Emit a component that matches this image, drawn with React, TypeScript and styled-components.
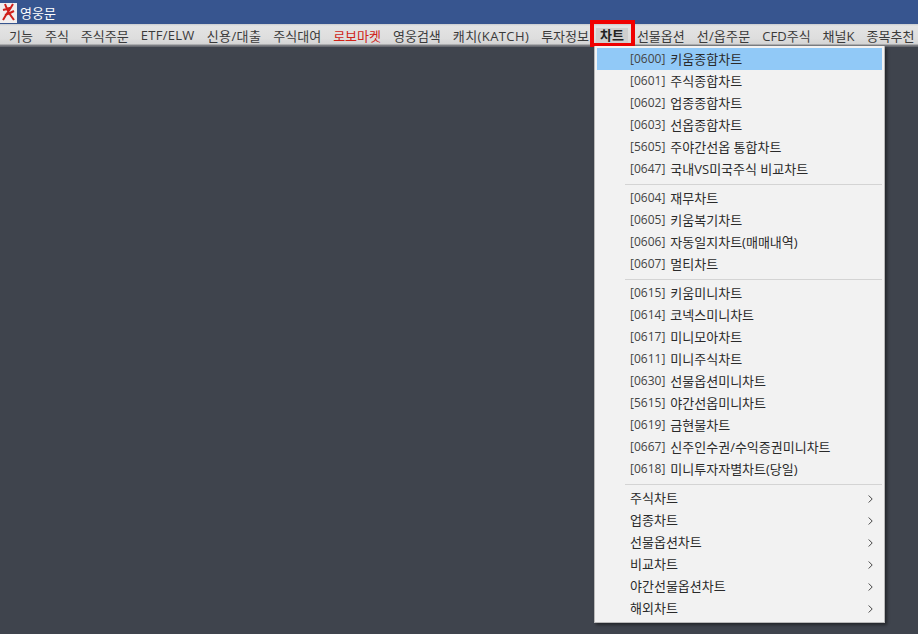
import React from "react";
import styled, { createGlobalStyle } from "styled-components";

const Global = createGlobalStyle`
  html, body { margin: 0; padding: 0; background: #3f444d; }
  body { width: 918px; height: 634px; overflow: hidden; font-family: "Open Sans", "Noto Sans CJK KR", sans-serif; }
`;

const Frame = styled.div`
  position: relative;
  width: 918px;
  height: 634px;
  display: flex;
  flex-direction: column;
  background: #3f444d;
`;

const TitleBar = styled.div`
  height: 24px;
  display: flex;
  align-items: center;
  gap: 3px;
  background: #37558f;
  color: #fff;
  font-size: 13px;
`;

const LogoBox = styled.div`
  width: 17px;
  height: 20px;
  margin-top: 1px;
  display: flex;
  align-items: center;
  justify-content: center;
  background: #f1eeee;
`;

const MenuBar = styled.div`
  height: 23px;
  display: flex;
  align-items: center;
  gap: 12px;
  padding: 0 0 1px 9px;
  box-sizing: border-box;
  overflow: hidden;
  white-space: nowrap;
  font-size: 13px;
  background: linear-gradient(#c9cbce 0, #e4e4e4 2px, #dedede 14px, #d4d4d4 20px, #85878b 21px, #5d6068 23px);
`;

const TopItem = styled.span<{ $red?: boolean; $active?: boolean; $track?: number }>`
  color: ${(p) => (p.$red ? "#cf2418" : "#3a3a3a")};
  letter-spacing: ${(p) => p.$track ?? 0}px;
  ${(p) =>
    p.$active
      ? `font-weight: 700; color: #222; background: #cfcfcf; padding: 0 4px; margin: 0 -3px 0 -5px; line-height: 15px;`
      : ""}
`;

const RedMark = styled.div`
  position: absolute;
  left: 590px;
  top: 20px;
  width: 45px;
  height: 27px;
  box-sizing: border-box;
  border: 4px solid #f00000;
  pointer-events: none;
`;

const Dropdown = styled.div`
  position: absolute;
  left: 594px;
  top: 46px;
  width: 291px;
  height: 577px;
  box-sizing: border-box;
  padding: 2px;
  background: #f2f2f2;
  border: 1px solid #b9b9b9;
  border-top: 0;
  box-shadow: 2px 2px 3px rgba(0, 0, 0, 0.45);
  font-size: 13px;
  color: #2a2a2a;
`;

const Row = styled.div<{ $active?: boolean }>`
  height: 22px;
  box-sizing: border-box;
  display: flex;
  align-items: center;
  padding: 0 9px 1px 33px;
  white-space: nowrap;
  background: ${(p) => (p.$active ? "#91c9f7" : "transparent")};
`;

const Code = styled.span`
  margin-right: 5px;
  font-size: 12px;
  color: #444;
`;

const Arrow = styled.svg`
  margin: 2px 0 0 auto;
  width: 5px;
  height: 8px;
`;

const Sep = styled.div`
  height: 1px;
  margin: 4px 0 2px 28px;
  background: #d4d4d4;
`;

const top: { t: string; red?: boolean; active?: boolean; track?: number }[] = [
  { t: "기능" }, { t: "주식" }, { t: "주식주문" }, { t: "ETF/ELW", track: 0.3 }, { t: "신용/대출", track: 0.4 }, { t: "주식대여" },
  { t: "로보마켓", red: true }, { t: "영웅검색" }, { t: "캐치(KATCH)", track: 0.4 }, { t: "투자정보" }, { t: "차트", active: true },
  { t: "선물옵션" }, { t: "선/옵주문", track: 0.2 }, { t: "CFD주식" }, { t: "채널K" }, { t: "종목추천" },
];

const groups: [string, string][][] = [
  [["0600", "키움종합차트"], ["0601", "주식종합차트"], ["0602", "업종종합차트"], ["0603", "선옵종합차트"], ["5605", "주야간선옵 통합차트"], ["0647", "국내VS미국주식 비교차트"]],
  [["0604", "재무차트"], ["0605", "키움복기차트"], ["0606", "자동일지차트(매매내역)"], ["0607", "멀티차트"]],
  [["0615", "키움미니차트"], ["0614", "코넥스미니차트"], ["0617", "미니모아차트"], ["0611", "미니주식차트"], ["0630", "선물옵션미니차트"], ["5615", "야간선옵미니차트"], ["0619", "금현물차트"], ["0667", "신주인수권/수익증권미니차트"], ["0618", "미니투자자별차트(당일)"]],
];

const subs = ["주식차트", "업종차트", "선물옵션차트", "비교차트", "야간선물옵션차트", "해외차트"];

export default function App() {
  return (
    <Frame>
      <Global />
      <TitleBar>
        <LogoBox>
          <svg width="15" height="19" viewBox="0 0 15 19">
            <path d="M4 1 L6 6 L8 10 L13 17 M12 1 L9 6 L5 12 L2 17 M2 7 L6 6 L11 4 M4 12 L9 10 L13 8" stroke="#cf1f1a" strokeWidth="2" fill="none" />
          </svg>
        </LogoBox>
        영웅문
      </TitleBar>
      <MenuBar>
        {top.map((m) => (
          <TopItem key={m.t} $red={m.red} $active={m.active} $track={m.track}>{m.t}</TopItem>
        ))}
      </MenuBar>
      <RedMark />
      <Dropdown>
        {groups.map((g, i) => (
          <React.Fragment key={i}>
            {g.map(([c, t]) => (
              <Row key={c} $active={c === "0600"}>
                <Code>[{c}]</Code>
                {t}
              </Row>
            ))}
            <Sep />
          </React.Fragment>
        ))}
        {subs.map((s) => (
          <Row key={s}>
            {s}
            <Arrow viewBox="0 0 5 8">
              <path d="M.7 .5 L4.2 4 L.7 7.5" stroke="#444" fill="none" />
            </Arrow>
          </Row>
        ))}
      </Dropdown>
    </Frame>
  );
}
